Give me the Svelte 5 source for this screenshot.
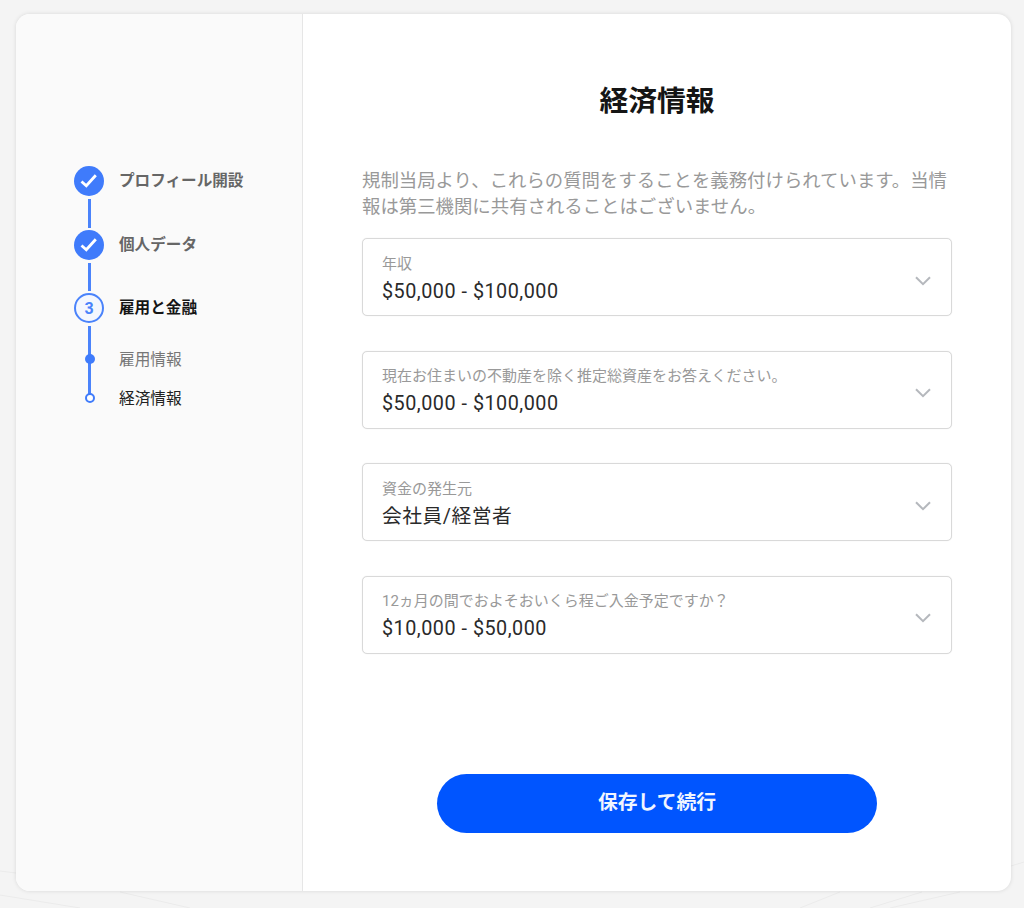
<script>
    const fields = [
        { label: "年収", value: "$50,000 - $100,000" },
        { label: "現在お住まいの不動産を除く推定総資産をお答えください。", value: "$50,000 - $100,000" },
        { label: "資金の発生元", value: "会社員/経営者" },
        { label: "12ヵ月の間でおよそおいくら程ご入金予定ですか？", value: "$10,000 - $50,000" }
    ];
</script>

<div class="page">
    <svg class="bg-lines" width="1024" height="908" viewBox="0 0 1024 908" fill="none">
        <path d="M0 871 L16 873 M0 895 L80 908 M120 892 L190 908 M1011 866 L1024 862 M960 892 L890 908 M922 892 L870 908 M840 892 L800 908" />
    </svg>

    <div class="card">
        <aside class="sidebar">
            <div class="step">
                <span class="dot done">
                    <svg width="30" height="30" viewBox="0 0 30 30" fill="none"><path d="M7.5 15.5 L12.3 19.8 L21.8 9.2" /></svg>
                </span>
                <span class="step-label">プロフィール開設</span>
            </div>
            <div class="line"></div>
            <div class="step">
                <span class="dot done">
                    <svg width="30" height="30" viewBox="0 0 30 30" fill="none"><path d="M7.5 15.5 L12.3 19.8 L21.8 9.2" /></svg>
                </span>
                <span class="step-label">個人データ</span>
            </div>
            <div class="line"></div>
            <div class="step">
                <span class="dot current">3</span>
                <span class="step-label active">雇用と金融</span>
            </div>
            <div class="substeps">
                <div class="sub">
                    <span class="sub-dot filled"></span>
                    <span class="sub-label">雇用情報</span>
                </div>
                <div class="sub">
                    <span class="sub-dot open"></span>
                    <span class="sub-label now">経済情報</span>
                </div>
            </div>
        </aside>

        <main class="content">
            <h1>経済情報</h1>
            <p class="intro">規制当局より、これらの質問をすることを義務付けられています。当情報は第三機関に共有されることはございません。</p>

            <div class="fields">
                {#each fields as f}
                    <div class="field">
                        <div class="field-text">
                            <div class="field-label">{f.label}</div>
                            <div class="field-value">{f.value}</div>
                        </div>
                        <svg class="chevron" width="16" height="10" viewBox="0 0 16 10" fill="none"><path d="M1 1.2 L8 8.2 L15 1.2" /></svg>
                    </div>
                {/each}
            </div>

            <div class="actions">
                <button type="button"><span>保存して続行</span></button>
            </div>
        </main>
    </div>
</div>

<style>
    :global(body) {
        background: #f4f4f4;
    }

    .page {
        position: relative;
        box-sizing: border-box;
        width: 1024px;
        height: 908px;
        padding: 14px 13px 17px 16px;
        background: #f4f4f4;
        font-family: Roboto, "Noto Sans CJK JP", sans-serif;
    }

    .bg-lines {
        position: absolute;
        left: 0;
        top: 0;
    }

    .bg-lines path {
        stroke: #ebebeb;
        stroke-width: 1;
    }

    .card {
        position: relative;
        display: flex;
        height: 100%;
        background: #fff;
        border-radius: 14px;
        overflow: hidden;
        box-shadow: 0 0 4px rgba(0, 0, 0, 0.12);
    }

    .sidebar {
        box-sizing: border-box;
        width: 287px;
        flex: none;
        padding: 152px 0 0 58px;
        background: #fafafa;
        border-right: 1px solid #e6e6e6;
    }

    .step {
        display: flex;
        align-items: center;
        gap: 15px;
        height: 30px;
    }

    .dot {
        box-sizing: border-box;
        width: 30px;
        height: 30px;
        flex: none;
        display: flex;
        align-items: center;
        justify-content: center;
        border-radius: 50%;
    }

    .dot.done {
        background: #3f7bfb;
    }

    .dot.done path {
        stroke: #fff;
        stroke-width: 2.8;
    }

    .dot.current {
        border: 2px solid #4a83fb;
        background: #f4f7fe;
        color: #4a83fb;
        font-size: 16px;
        font-weight: 700;
    }

    .step-label {
        padding-bottom: 4px;
        font-size: 15.6px;
        font-weight: 700;
        color: #666;
    }

    .step-label.active {
        color: #151515;
    }

    .line {
        width: 3px;
        height: 28.5px;
        margin: 3px 0 2px 14px;
        background: #4a83fb;
    }

    .substeps {
        position: relative;
        margin-top: 3px;
        padding-top: 23px;
    }

    .substeps::before {
        content: "";
        position: absolute;
        left: 14px;
        top: 0;
        width: 3px;
        height: 71px;
        background: #4a83fb;
    }

    .sub {
        position: relative;
        display: flex;
        align-items: center;
        height: 20px;
        margin-bottom: 19px;
    }

    .sub-dot {
        box-sizing: border-box;
        position: relative;
        width: 10px;
        height: 10px;
        margin: 0 24px 0 11px;
        flex: none;
        border-radius: 50%;
    }

    .sub-dot.filled {
        background: #3f7bfb;
    }

    .sub-dot.open {
        background: #fff;
        border: 2px solid #3f7bfb;
    }

    .sub-label {
        padding-bottom: 2px;
        font-size: 15.7px;
        color: #777;
    }

    .sub-label.now {
        color: #222;
    }

    .content {
        flex: 1;
        box-sizing: border-box;
        padding: 0 59px;
        display: flex;
        flex-direction: column;
    }

    h1 {
        margin: 67px 0 0;
        height: 40px;
        line-height: 40px;
        text-align: center;
        font-size: 28.8px;
        font-weight: 700;
        color: #151515;
    }

    .intro {
        margin: 47px 0 0;
        font-size: 18.4px;
        line-height: 26px;
        color: #999;
    }

    .fields {
        margin-top: 18px;
        display: flex;
        flex-direction: column;
        gap: 34.67px;
    }

    .field {
        box-sizing: border-box;
        height: 78px;
        padding: 5px 20px 0 19px;
        display: flex;
        align-items: center;
        justify-content: space-between;
        border: 1px solid #d9d9d9;
        border-radius: 5px;
        background: #fff;
        box-shadow: 0 0 1px rgba(0, 0, 0, 0.12);
    }

    .field-label {
        font-size: 15px;
        line-height: 18px;
        color: #999;
    }

    .field-value {
        margin-top: 6px;
        font-size: 19.8px;
        line-height: 26px;
        letter-spacing: 0.5px;
        color: #2a2a2a;
    }

    .chevron {
        margin-top: 2px;
    }

    .chevron path {
        stroke: #b5b8bd;
        stroke-width: 2;
    }

    .actions {
        margin-top: 120px;
        display: flex;
        justify-content: center;
    }

    button {
        width: 440px;
        height: 59px;
        padding: 0 0 5px;
        border: 0;
        border-radius: 30px;
        background: #0055ff;
        color: #f0f5ff;
        font-family: inherit;
        font-size: 19.8px;
        font-weight: 700;
    }
</style>
